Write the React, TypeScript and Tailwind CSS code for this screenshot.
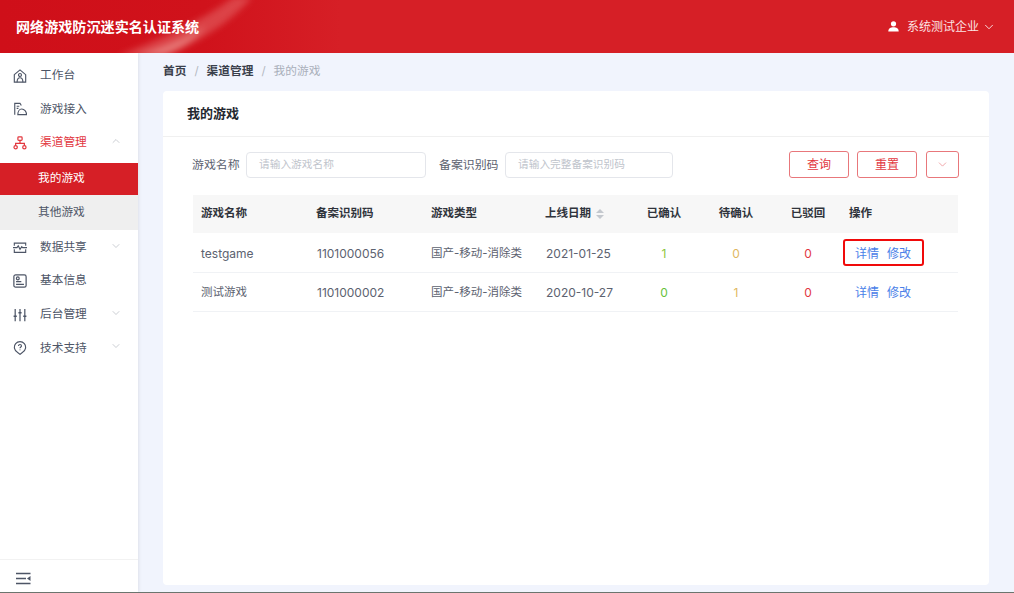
import { ChevronDown, ChevronUp } from "lucide-react"
import type { ReactNode } from "react"

const iconProps = { width: 14, height: 14, viewBox: "0 0 16 16", fill: "none", stroke: "currentColor", strokeWidth: 1.3 }

const HomeIcon = () => (
  <svg {...iconProps}>
    <path d="M1.5 6.5 8 1l6.5 5.5V15h-13z" />
    <circle cx="8" cy="6.8" r="1.7" />
    <path d="M4.7 15c0-3.5 1-5 3.3-5s3.3 1.5 3.3 5" />
  </svg>
)
const AccessIcon = () => (
  <svg {...iconProps}>
    <path d="M2 14.5V1.5h6l1.5 2.5" />
    <path d="M4.2 4.8h3M4.2 7.3h2" />
    <path d="M5.5 14.5c0-3.5 1.7-6.5 4.5-6.5s5.5 3 5.5 6.5z" />
    <path d="M9 12h.1M12 12h.1" />
  </svg>
)
const ChannelIcon = () => (
  <svg {...iconProps} strokeWidth={1.4}>
    <rect x="5.6" y="1" width="4.8" height="4" rx="1" />
    <path d="M8 5v3.5M3 10.8V8.5h10v2.3" />
    <circle cx="3" cy="12.8" r="1.9" />
    <circle cx="13" cy="12.8" r="1.9" />
  </svg>
)
const ShareIcon = () => (
  <svg {...iconProps}>
    <path d="M1.5 5.5V2.5h13v3M1.5 9.5V13h13V9.5" />
    <path d="M0 7.5h4.5l1.5-2 2 4 2-3 1 1h5" />
  </svg>
)
const InfoIcon = () => (
  <svg {...iconProps} strokeWidth={1.4}>
    <rect x="1" y="1" width="14" height="14" rx="2" />
    <circle cx="5.5" cy="5" r="1.6" />
    <path d="M3.5 8.7h6M3.5 11.8h9" />
  </svg>
)
const SlidersIcon = () => (
  <svg {...iconProps} strokeWidth={1.4}>
    <path d="M2.5 1v14M8 1v14M13.5 1v14" />
    <path d="M.7 9.5h3.6M6.2 5.5h3.6M11.7 9.5h3.6" strokeWidth={1.8} />
  </svg>
)
const HelpIcon = () => (
  <svg {...iconProps}>
    <path d="M8 15.3 5 12.8a6.4 6.4 0 1 1 6 0z" />
    <path d="M6.3 5.6c0-2.2 3.4-2.2 3.4 0 0 1.3-1.7 1.3-1.7 2.8M8 9.8v.9" />
  </svg>
)

function NavItem({ icon, label, arrow, active }: { icon: ReactNode; label: string; arrow?: "up" | "down"; active?: boolean }) {
  return (
    <div className={`flex h-[33.6px] items-center pl-[13px] pr-[16px] text-[11.7px] ${active ? "text-[#e2383f]" : "text-[#4d5566]"}`}>
      <span className="flex w-[27px] shrink-0">{icon}</span>
      <span className="flex-1">{label}</span>
      {arrow === "up" && <ChevronUp size={12} strokeWidth={1.2} className="-mt-1 text-[#a8adb5]" />}
      {arrow === "down" && <ChevronDown size={12} strokeWidth={1.2} className="-mt-1 text-[#a8adb5]" />}
    </div>
  )
}

const rows = [
  { name: "testgame", code: "1101000056", date: "2021-01-25", ok: 1, wait: 0, marked: true },
  { name: "测试游戏", code: "1101000002", date: "2020-10-27", ok: 0, wait: 1, marked: false },
]

export default function App() {
  return (
    <div
      className="flex h-[593px] w-[1014px] flex-col overflow-hidden border-b border-[#6b756e] bg-[#f1f4fd] text-[12px] text-[#5c6270]"
      style={{ fontFamily: '"Inter", "Noto Sans CJK SC", sans-serif' }}
    >
      {/* Header */}
      <header className="relative flex h-[53px] shrink-0 items-center justify-between bg-[#d61f26] pl-4 pr-[20px] text-white">
        <svg className="absolute left-0 top-0 h-[53px] w-[340px]" viewBox="0 0 340 53" preserveAspectRatio="none">
          <defs>
            <linearGradient id="hd" x1="0" y1="0" x2="1" y2="0">
              <stop offset="0" stopColor="#cf0f19" />
              <stop offset="0.6" stopColor="#d0121b" />
              <stop offset="1" stopColor="#d61f26" />
            </linearGradient>
            <filter id="soft">
              <feGaussianBlur stdDeviation="3" />
            </filter>
          </defs>
          <rect width="340" height="53" fill="url(#hd)" />
          <g filter="url(#soft)">
            <path d="M118 56C156 40 196 25 234 -3h18C226 28 190 45 166 56z" fill="#e8716f" opacity="0.5" />
            <path d="M136 56c30-10 50-18 70-30-12 14-25 24-45 30z" fill="#f4b6b0" opacity="0.45" />
          </g>
        </svg>
        <span className="relative text-[14.1px] font-bold">网络游戏防沉迷实名认证系统</span>
        <div className="relative flex items-center text-[12px] text-[#fbe3e3]">
          <svg width="11" height="11" viewBox="0 0 11 11" fill="white" className="mr-[8px]">
            <circle cx="5.5" cy="2.8" r="2.6" />
            <path d="M.3 10.5C.3 7.5 2.5 6.3 5.5 6.3s5.2 1.2 5.2 4.2z" />
          </svg>
          <span>系统测试企业</span>
          <ChevronDown size={14} strokeWidth={1.4} className="ml-[3px] -mr-[2px] text-white" />
        </div>
      </header>

      <div className="flex min-h-0 flex-1">
        {/* Sidebar */}
        <aside className="flex w-[138px] shrink-0 flex-col justify-between bg-white shadow-[1px_0_3px_rgba(0,0,0,0.08)]">
          <nav className="pt-[6px] text-[11.7px]">
            <NavItem icon={<HomeIcon />} label="工作台" />
            <NavItem icon={<AccessIcon />} label="游戏接入" />
            <NavItem icon={<ChannelIcon />} label="渠道管理" arrow="up" active />
            <div className="mt-[3px] flex h-[32px] items-center bg-[#d61f26] pl-[38px] text-white">我的游戏</div>
            <div className="mb-[1px] flex h-[35px] items-center bg-[#efefef] pl-[38px] text-[#4d5566]">其他游戏</div>
            <NavItem icon={<ShareIcon />} label="数据共享" arrow="down" />
            <NavItem icon={<InfoIcon />} label="基本信息" />
            <NavItem icon={<SlidersIcon />} label="后台管理" arrow="down" />
            <NavItem icon={<HelpIcon />} label="技术支持" arrow="down" />
          </nav>
          <div className="flex h-[33px] items-center border-t border-[#f2f2f2] pl-4 pt-[5px] text-[#4d5566]">
            <svg width="15" height="13" viewBox="0 0 15 13" fill="none" stroke="currentColor" strokeWidth="1.3">
              <path d="M0 1.5h14.5M0 6.5h10M0 11.5h14.5" />
              <path d="M14.5 4v5L11 6.5z" fill="currentColor" stroke="none" />
            </svg>
          </div>
        </aside>

        {/* Main */}
        <main className="flex min-w-0 flex-1 flex-col pl-[25px] pr-[25px] pb-[7px]">
          <div className="flex h-[38px] shrink-0 items-center text-[11.7px]">
            <span className="font-bold text-[#3a3f4b]">首页</span>
            <span className="mx-[8px] text-[#b4b9c2]">/</span>
            <span className="font-bold text-[#3a3f4b]">渠道管理</span>
            <span className="mx-[8px] text-[#b4b9c2]">/</span>
            <span className="text-[#a9afba]">我的游戏</span>
          </div>

          <section className="flex-1 rounded-[4px] bg-white">
            <h2 className="flex h-[46px] items-center border-b border-[#f0f0f0] pl-6 text-[13px] font-bold text-[#23272f]">我的游戏</h2>

            <div className="px-[30px] pt-[15px]">
              {/* Filter */}
              <div className="-ml-[1px] flex h-[26px] items-center text-[11.9px]">
                <span className="w-[53px] whitespace-nowrap">游戏名称</span>
                <div className="ml-[1px] flex h-[26px] w-[180px] items-center rounded-[4px] border border-[#e4e6eb] pl-[12px] text-[10.7px] text-[#c0c4cc]">请输入游戏名称</div>
                <span className="ml-[13px] w-[59px] whitespace-nowrap">备案识别码</span>
                <div className="ml-[7px] flex h-[26px] w-[168px] items-center rounded-[4px] border border-[#e4e6eb] pl-[12px] text-[10.7px] text-[#c0c4cc]">请输入完整备案识别码</div>
                <div className="-mt-[1px] ml-auto flex text-[#e2383f]">
                  <button className="h-[27px] w-[60px] rounded-[3px] border border-[#e8777b] text-[12px]">查询</button>
                  <button className="ml-2 h-[27px] w-[60px] rounded-[3px] border border-[#e8777b] text-[12px]">重置</button>
                  <button className="ml-[9px] flex h-[27px] w-[33px] items-center justify-center rounded-[3px] border border-[#e8777b]">
                    <ChevronDown size={13} strokeWidth={1.2} className="text-[#e8777b]" />
                  </button>
                </div>
              </div>

              {/* Table */}
              <table className="mt-[17px] w-[765px] table-fixed border-collapse text-left text-[11.5px]">
                <colgroup>
                  <col className="w-[115px]" />
                  <col className="w-[115px]" />
                  <col className="w-[114px]" />
                  <col className="w-[91px]" />
                  <col className="w-[72px]" />
                  <col className="w-[72px]" />
                  <col className="w-[72px]" />
                  <col className="w-[114px]" />
                </colgroup>
                <thead>
                  <tr className="h-[38px] bg-[#f7f7f7] font-bold text-[#30343c]">
                    <th className="pl-2">游戏名称</th>
                    <th className="pl-2">备案识别码</th>
                    <th className="pl-2">游戏类型</th>
                    <th className="pl-2">
                      <span className="flex items-center gap-[5px]">
                        上线日期
                        <svg width="8" height="10" viewBox="0 0 8 10" fill="#c4c8ce">
                          <path d="M4 0 8 4H0zM0 6h8l-4 4z" />
                        </svg>
                      </span>
                    </th>
                    <th className="text-center">已确认</th>
                    <th className="text-center">待确认</th>
                    <th className="text-center">已驳回</th>
                    <th className="pl-[5px]">操作</th>
                  </tr>
                </thead>
                <tbody>
                  {rows.map((r) => (
                    <tr key={r.code} className="h-[39px] border-b border-[#f0f2f5] [&>td]:pt-[3px]">
                      <td className={`pl-2 ${r.marked ? "text-[12px]" : ""}`}>{r.name}</td>
                      <td className="pl-[9px] text-[12px]">{r.code}</td>
                      <td className="pl-[8px]">国产-移动-消除类</td>
                      <td className="pl-[9px] text-[12px]">{r.date}</td>
                      <td className={`text-center text-[12px] ${r.ok ? "text-[#8cc63f]" : "text-[#67c23a]"}`}>{r.ok}</td>
                      <td className="text-center text-[12px] text-[#dfb85f]">{r.wait}</td>
                      <td className="text-center text-[12px] text-[#e2383f]">0</td>
                      <td className="pl-[11px] text-[12px] text-[#4a80e8]">
                        <span className="relative flex gap-2">
                          <span>详情</span>
                          <span>修改</span>
                          {r.marked && (
                            <span className="absolute left-[-12px] top-[-6px] h-[27px] w-[81px] rounded-[3px] border-[2px] border-[#f00a0a]" />
                          )}
                        </span>
                      </td>
                    </tr>
                  ))}
                </tbody>
              </table>
            </div>
          </section>
        </main>
      </div>
    </div>
  )
}
